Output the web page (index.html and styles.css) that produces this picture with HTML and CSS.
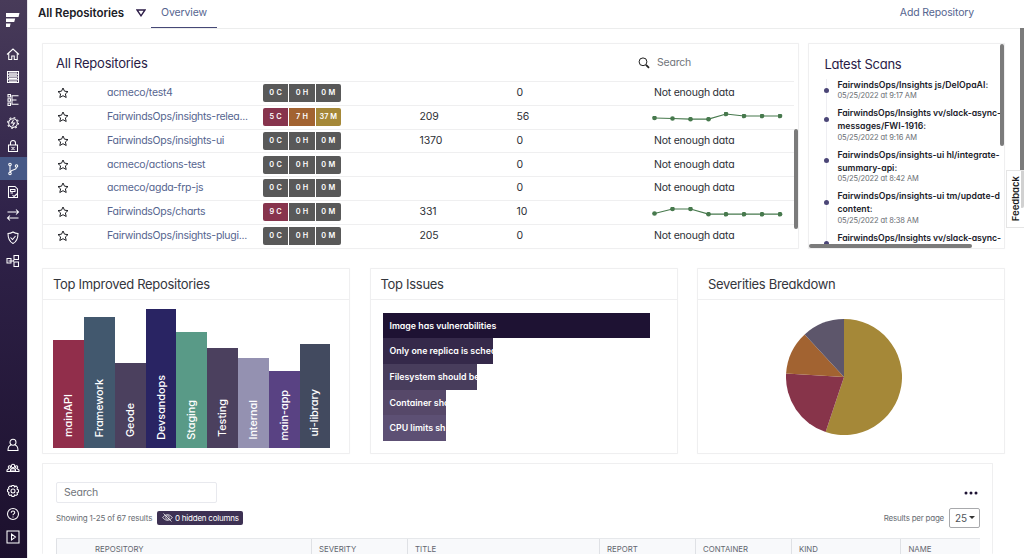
FILE: index.html
```html
<!DOCTYPE html>
<html lang="en">
<head>
<meta charset="utf-8">
<title>All Repositories</title>
<link rel="stylesheet" href="styles.css">
</head>
<body>
<svg class="defs" width="0" height="0"><defs><marker id="dot" viewBox="0 0 6 6" refX="3" refY="3" markerWidth="5" markerHeight="5" markerUnits="userSpaceOnUse"><circle cx="3" cy="3" r="2.800" fill="#47794d"/></marker></defs></svg>
<div class="app">
  <nav class="sidebar">
    <svg class="logo" viewBox="0 0 14 14"><path d="M0 0h13.500l-1 4H0zM0 5.400h9.200l-1 3.500H0zM0 10.400h4.600l-.8 3.600H0z" fill="#fff"/></svg>
    <a class="nav"><svg viewBox="0 0 24 24"><path d="M0 13 12 2l12 11M3.500 11v12h6v-7h5v7h6V11"/></svg></a>
    <a class="nav"><svg viewBox="0 0 24 24"><path d="M1 1h22v22H1zM1 6.500h22M1 12h22M1 17.500h22M4 3.800h16M4 9.300h16M4 14.800h16M4 20.300h16"/></svg></a>
    <a class="nav"><svg viewBox="0 0 24 24"><path d="M2 1h5v5H2zM2 9.500h5v5H2zM2 18h5v5H2zM9 3.500h14M9 12h10M9 20.500h14M10 3v18"/></svg></a>
    <a class="nav"><svg viewBox="0 0 24 24"><circle cx="12" cy="12" r="8.700"/><circle cx="12" cy="12" r="10.900" stroke-dasharray="3.500 5.060"/><path d="m13 6-4 6h6l-4 6"/></svg></a>
    <a class="nav"><svg viewBox="0 0 24 24"><path d="M3 10h18v13H3zM7 10V6a5 5 0 0 1 10 0v4M9 14l6 6M15 14l-6 6"/></svg></a>
    <a class="nav active"><svg viewBox="0 0 24 24"><circle cx="6" cy="3" r="2.500"/><circle cx="19" cy="6" r="2.500"/><circle cx="6" cy="21" r="2.500"/><path d="M6 6v12M19 9c0 6-10 3-12 9"/></svg></a>
    <a class="nav"><svg viewBox="0 0 24 24"><path d="M3 1h13l5 5v17H3zM7 7h9v4H7zM7 14h5M11 18l3 3 7-6"/></svg></a>
    <a class="nav"><svg viewBox="0 0 24 24"><path d="M1 6h22M18 1l5 5-5 5M23 18H1M6 13l-5 5 5 5"/></svg></a>
    <a class="nav"><svg viewBox="0 0 24 24"><path d="M12 0c3 2 6 3 10 3 0 10-2 16-10 20C4 19 2 13 2 3c4 0 7-1 10-3zM7 11l4 4 6-7"/></svg></a>
    <a class="nav"><svg viewBox="0 0 24 24"><path d="M0 7h8v9H0zM14 1h9v8h-9zM14 14h9v9h-9zM8 12h4l3-3M12 12l3 3M3 12h4"/></svg></a>
    <div class="grow"></div>
    <a class="nav"><svg viewBox="0 0 24 24"><circle cx="12" cy="6.500" r="6"/><path d="M8 12c-4 1-6 4-6 11h20c0-7-2-10-6-11"/></svg></a>
    <a class="nav"><svg viewBox="0 0 24 24"><circle cx="12" cy="8" r="3.500"/><circle cx="5" cy="10" r="2.500"/><circle cx="19" cy="10" r="2.500"/><path d="M7 19v-4q5-5 10 0v4zM7 19H0v-3l4-3M17 19h7v-3l-4-3M10 15v4M14 15v4"/></svg></a>
    <a class="nav"><svg viewBox="0 0 24 24"><circle cx="12" cy="12" r="4"/><path d="m10 1 4 0 1 3 3-2 3 3-1 3 3 2v4l-3 1 1 4-3 2-3-1-1 3h-4l-1-3-4 1-2-3 1-3-3-2v-4l3-1-1-3 3-3 3 1z"/></svg></a>
    <a class="nav"><svg viewBox="0 0 24 24"><circle cx="12" cy="12" r="11"/><path d="M8.500 9.500c0-5 7-4 7-.5 0 3-3.500 2.500-3.500 5.500M12 17v2"/></svg></a>
    <a class="nav"><svg viewBox="0 0 24 24"><path d="M0 0h24v24H0zM9 6v12l8-6z"/></svg></a>
  </nav>
  <main class="main">
    <header class="topbar">
      <strong class="page-name">All Repositories</strong>
      <svg class="caret" viewBox="0 0 10 8"><path d="M1 1h8L5 6.800z"/></svg>
      <a class="tab">Overview</a>
      <a class="add">Add Repository</a>
    </header>
    <div class="content">
      <div class="row top-row">
        <section class="card repos">
          <div class="repos-head"><h2>All Repositories</h2>
            <svg class="mag" viewBox="0 0 12 12"><circle cx="5" cy="4.800" r="3.900"/><path class="handle" d="m8 7.800 3 3"/></svg><span class="ph">Search</span></div>
          <div class="repo"><svg class="star" viewBox="0 0 12 12"><path d="m6 1 1.500 3.200 3.500.4-2.600 2.300.8 3.600L6 8.700l-3.200 1.800.8-3.600L1 4.600l3.500-.4z"/></svg><a>acmeco/test4</a><span class="sev"><b>0 C</b><b>0 H</b><b>0 M</b></span><span class="n1"></span><span class="n2">0</span><span class="trend">Not enough data</span></div>
          <div class="repo"><svg class="star" viewBox="0 0 12 12"><path d="m6 1 1.500 3.200 3.500.4-2.600 2.300.8 3.600L6 8.700l-3.200 1.800.8-3.600L1 4.600l3.500-.4z"/></svg><a>FairwindsOps/insights-relea...</a><span class="sev"><b class="crit">5 C</b><b class="high">7 H</b><b class="med">37 M</b></span><span class="n1">209</span><span class="n2">56</span><svg class="spark" viewBox="0 0 132 20"><polyline points="2.500,11 20.500,11.500 38.500,12.200 56.500,12.200 74,7 92,9 110,9 128,9"/></svg></div>
          <div class="repo"><svg class="star" viewBox="0 0 12 12"><path d="m6 1 1.500 3.200 3.500.4-2.600 2.300.8 3.600L6 8.700l-3.200 1.800.8-3.600L1 4.600l3.500-.4z"/></svg><a>FairwindsOps/insights-ui</a><span class="sev"><b>0 C</b><b>0 H</b><b>0 M</b></span><span class="n1">1370</span><span class="n2">0</span><span class="trend">Not enough data</span></div>
          <div class="repo"><svg class="star" viewBox="0 0 12 12"><path d="m6 1 1.500 3.200 3.500.4-2.600 2.300.8 3.600L6 8.700l-3.200 1.800.8-3.600L1 4.600l3.500-.4z"/></svg><a>acmeco/actions-test</a><span class="sev"><b>0 C</b><b>0 H</b><b>0 M</b></span><span class="n1"></span><span class="n2">0</span><span class="trend">Not enough data</span></div>
          <div class="repo"><svg class="star" viewBox="0 0 12 12"><path d="m6 1 1.500 3.200 3.500.4-2.600 2.300.8 3.600L6 8.700l-3.200 1.800.8-3.600L1 4.600l3.500-.4z"/></svg><a>acmeco/agda-frp-js</a><span class="sev"><b>0 C</b><b>0 H</b><b>0 M</b></span><span class="n1"></span><span class="n2">0</span><span class="trend">Not enough data</span></div>
          <div class="repo"><svg class="star" viewBox="0 0 12 12"><path d="m6 1 1.500 3.200 3.500.4-2.600 2.300.8 3.600L6 8.700l-3.200 1.800.8-3.600L1 4.600l3.500-.4z"/></svg><a>FairwindsOps/charts</a><span class="sev"><b class="crit">9 C</b><b>0 H</b><b>0 M</b></span><span class="n1">331</span><span class="n2">10</span><svg class="spark" viewBox="0 0 132 20"><polyline points="2.500,11.500 20.500,7 38.500,7 56.500,12.200 74,12.200 92,12.200 110,12.200 128,12.200"/></svg></div>
          <div class="repo"><svg class="star" viewBox="0 0 12 12"><path d="m6 1 1.500 3.200 3.500.4-2.600 2.300.8 3.600L6 8.700l-3.200 1.800.8-3.600L1 4.600l3.500-.4z"/></svg><a>FairwindsOps/insights-plugi...</a><span class="sev"><b>0 C</b><b>0 H</b><b>0 M</b></span><span class="n1">205</span><span class="n2">0</span><span class="trend">Not enough data</span></div>
          <i class="bar repo-bar"></i>
        </section>
        <section class="card scans">
          <h2>Latest Scans</h2>
          <div class="timeline">
            <div class="scan"><b>FairwindsOps/Insights js/DelOpaAI:</b><time>05/25/2022 at 9:17 AM</time></div>
            <div class="scan"><b class="tight">FairwindsOps/Insights vv/slack-async-</b><b>messages/FWI-1916:</b><time>05/25/2022 at 9:16 AM</time></div>
            <div class="scan"><b>FairwindsOps/insights-ui hl/integrate-</b><b>summary-api:</b><time>05/25/2022 at 8:42 AM</time></div>
            <div class="scan"><b>FairwindsOps/insights-ui tm/update-d</b><b>content:</b><time>05/25/2022 at 8:38 AM</time></div>
            <div class="scan"><b class="tight">FairwindsOps/Insights vv/slack-async-</b></div>
          </div>
          <i class="bar scan-v"></i><i class="bar scan-h"></i>
        </section>
      </div>
      <div class="row mid-row">
        <section class="card chart"><h3>Top Improved Repositories</h3>
          <div class="columns">
            <div style="height:108px;background:#912e4b"><span>mainAPI</span></div>
            <div style="height:131px;background:#42586e"><span>Framework</span></div>
            <div style="height:85px;background:#4b405e"><span>Geode</span></div>
            <div style="height:139px;background:#292463"><span class="low">Devsandops</span></div>
            <div style="height:116px;background:#599a87"><span class="low">Staging</span></div>
            <div style="height:100px;background:#4b405e"><span>Testing</span></div>
            <div style="height:90px;background:#9491b1"><span class="low">Internal</span></div>
            <div style="height:77px;background:#594283"><span class="low">main-app</span></div>
            <div style="height:104px;background:#424a5f"><span>ui-library</span></div>
          </div>
        </section>
        <section class="card chart"><h3>Top Issues</h3>
          <div class="issues">
            <div style="width:267px;background:#1e1233">Image has vulnerabilities</div>
            <div style="width:110px;background:#35294a">Only one replica is sched</div>
            <div style="width:94px;background:#483d5c">Filesystem should be</div>
            <div style="width:63px;background:#564869">Container sho</div>
            <div style="width:63px;background:#5d5074">CPU limits sh</div>
          </div>
        </section>
        <section class="card chart"><h3>Severities Breakdown</h3>
          <svg class="pie" viewBox="-58 -58 116 116"><path fill="#a58838" d="M0 0V-58A58 58 0 1 1-18.400 55z"/><path fill="#87344a" d="M0 0-18.400 55A58 58 0 0 1-57.900-3.500z"/><path fill="#a26331" d="M0 0-57.900-3.500A58 58 0 0 1-39.300-42.600z"/><path fill="#5d566b" d="M0 0-39.300-42.600A58 58 0 0 1 0-58z"/></svg>
        </section>
      </div>
      <section class="card results">
        <div class="input">Search</div>
        <div class="tools">
          <span class="showing">Showing 1-25 of 67 results</span>
          <span class="hidden"><svg viewBox="0 0 12 10"><path d="M.5 5Q6-1.500 11.500 5 6 11.500.500 5zM1.500.5l9 9"/><circle cx="6" cy="5" r="2"/></svg><span>0 hidden columns</span></span>
          <span class="grow"></span>
          <span class="per">Results per page</span>
          <div class="pager"><svg class="dots" viewBox="0 0 14 4"><circle cx="2" cy="2" r="1.500"/><circle cx="7" cy="2" r="1.500"/><circle cx="12" cy="2" r="1.500"/></svg><span class="select">25<i></i></span></div>
        </div>
        <div class="thead"><span>REPOSITORY</span><span>SEVERITY</span><span>TITLE</span><span>REPORT</span><span>CONTAINER</span><span>KIND</span><span>NAME</span></div>
      </section>
    </div>
  </main>
  <i class="page-bar"></i>
  <div class="feedback"><span>Feedback</span></div>
</div>
</body>
</html>
```
FILE: styles.css
```css
* { box-sizing: border-box; }
body { margin: 0; background: #fff; color: #2d2f36; font-family: Inter, "Open Sans", sans-serif; font-feature-settings: "cv11"; }
.defs { position: absolute; }
h2, h3 { margin: 0; font-weight: 400; white-space: nowrap; }
.app { position: relative; display: flex; width: 1024px; height: 559px; overflow: hidden; }
.sidebar { display: flex; flex-direction: column; width: 28px; height: 558px; flex: none; padding: 13px 0 9px; background: linear-gradient(#483b59, #30234a 38%, #1c102d); border-right: 1px solid #e9e7ec; }
.logo { width: 14px; height: 14px; margin: 0 0 15px 6px; flex: none; }
.nav { display: flex; height: 23.070px; flex: none; align-items: center; padding-left: 7px; }
.nav.active { background: #465886; }
.nav svg { width: 12px; height: 12px; fill: none; stroke: #fff; stroke-width: 2.100; overflow: visible; }
.grow { flex: 1; }
.main { flex: 1; min-width: 0; display: flex; flex-direction: column; }
.topbar { height: 29px; flex: none; display: flex; align-items: flex-start; margin-right: 4px; padding: 0 46px 0 10px; border-bottom: 1px solid #eceded; line-height: 25px; white-space: nowrap; }
.page-name { width: 98px; font-size: 11.500px; font-weight: 600; letter-spacing: -.04px; line-height: 26px; color: #202127; }
.caret { width: 10px; height: 8px; margin-top: 9px; fill: none; stroke: #2c1c47; stroke-width: 1.400; }
.tab { width: 66px; height: 28px; margin-left: 5px; text-align: center; font-size: 10.500px; color: #56658f; border-bottom: 1px solid #454876; letter-spacing: -.13px; }
.add { margin-left: auto; font-size: 10.500px; color: #56658f; letter-spacing: -.15px; }
.content { padding: 14px 0 0 14px; width: 982px; }
.row { display: flex; }
.top-row { height: 206px; gap: 9px; }
.card { position: relative; background: #fff; border: 1px solid #efeff0; box-shadow: 0 0 1px #eee; border-radius: 1px; }
.repos { width: 757.400px; }
h2 { font-size: 13px; color: #291b46; letter-spacing: -.22px; }
.repos-head { height: 37px; display: flex; align-items: center; padding-left: 13px; }
.repos-head h2 { width: 583px; }
.mag { width: 12px; height: 12px; margin-left: -1px; fill: none; stroke: #222; stroke-width: 1; }
.mag .handle { stroke-width: 1.700; }
.ph { margin-left: 7px; font-size: 10.500px; letter-spacing: -.2px; color: #71757b; }
.repo { height: 23.750px; border-top: 1px solid #efeff0; display: flex; align-items: center; padding-left: 14px; margin-right: 4px; font-size: 10.500px; line-height: 16px; white-space: nowrap; }
.star { width: 12px; height: 12px; fill: none; stroke: #202126; stroke-width: 1; flex: none; }
.repo a { width: 156px; margin-left: 38px; color: #56658f; letter-spacing: -.28px; flex: none; }
.sev { display: flex; width: 78px; gap: 1px; flex: none; border-radius: 2px; overflow: hidden; }
.sev b { flex: 1; height: 18px; background: #595959; color: #fff; font-size: 7.300px; font-weight: 600; letter-spacing: .2px; line-height: 18px; text-align: center; }
.sev .crit { background: #87344d; } .sev .high { background: #a26331; } .sev .med { background: #a58838; letter-spacing: 0; }
.n1 { width: 97px; margin-left: 78.500px; flex: none; letter-spacing: -.1px; } .n2 { width: 137.500px; flex: none; letter-spacing: -.1px; }
.trend { letter-spacing: -.22px; }
.spark { width: 132px; height: 20px; margin-left: -2px; fill: none; stroke: #47794d; stroke-width: 1.200; overflow: visible; }
.spark polyline { marker: url(#dot); }
.bar { position: absolute; background: #7b7b7b; border-radius: 2px; }
.repo-bar { right: 0; top: 85px; width: 4px; height: 100px; }
.scans { width: 197px; padding: 12px 4px 0 15px; overflow: hidden; }
.scans h2 { line-height: 16px; letter-spacing: -.25px; }
.timeline { margin: 6.500px 0 0 2px; border-left: 1px solid #eeeef2; padding-left: 10px; width: 177px; height: 168px; }
.scan { position: relative; margin-bottom: 3.400px; }
.scan::before { content: ""; position: absolute; left: -13px; top: 9.500px; width: 5px; height: 5px; border-radius: 50%; background: #4b4677; }
.scan b { display: block; font-size: 8.700px; font-weight: 600; line-height: 12.750px; white-space: nowrap; color: #20212a; letter-spacing: .03px; }
.scan .tight { letter-spacing: -.05px; }
.scan time { display: block; font-size: 7.500px; line-height: 12px; margin-top: -1px; color: #696d73; margin-bottom: 5px; letter-spacing: -.12px; }
.scan-v { right: 0; top: 0; width: 4px; height: 102px; } .scan-h { left: 0; bottom: 0; width: 163px; height: 4px; }
.mid-row { margin-top: 19px; gap: 19.500px; height: 186px; }
.chart { width: 308px; }
h3 { height: 31px; line-height: 31px; font-size: 13px; letter-spacing: -.3px; padding-left: 10px; border-bottom: 1px solid #efeff0; color: #34363c; }
.columns { display: flex; align-items: flex-end; height: 148px; margin-left: 10.300px; width: 277px; }
.columns div { flex: 1; display: flex; justify-content: center; align-items: flex-end; padding: 0 0 11px 1px; }
.columns span { writing-mode: vertical-rl; transform: rotate(180deg); color: #fff; font-size: 10.800px; font-weight: 500; line-height: 14px; white-space: nowrap; }
.columns .low { margin-bottom: -3px; }
.issues { padding: 12.500px 0 0 12.500px; }
.issues div { height: 25.700px; line-height: 25px; padding-left: 6.500px; overflow: hidden; white-space: nowrap; color: #fff; font-size: 8.800px; font-weight: 600; }
.pie { display: block; width: 116px; height: 116px; margin: 19px 0 0 88px; }
.results { width: 951px; height: 91px; margin-top: 9px; padding: 18px 12px 0 13px; border-bottom: 0; box-shadow: none; overflow: hidden; }
.input { width: 161px; height: 21px; border: 1px solid #e8e9ee; border-radius: 2px; padding-left: 7px; font-size: 10.500px; line-height: 19px; letter-spacing: -.2px; color: #71757b; }
.tools { height: 34.500px; display: flex; align-items: center; padding-bottom: 5px; color: #696d73; font-size: 8px; }
.showing { width: 101px; white-space: nowrap; letter-spacing: -.17px; }
.hidden { width: 86px; height: 14px; display: flex; align-items: center; gap: 2px; border-radius: 2px; padding-left: 5px; background: #3d3153; color: #fff; font-size: 8px; white-space: nowrap; letter-spacing: -.23px; }
.hidden svg { width: 11px; height: 9px; fill: none; stroke: #fff; stroke-width: .8; }
.per { margin-right: 5px; letter-spacing: -.23px; }
.pager { position: relative; }
.dots { position: absolute; right: 2px; top: -17px; width: 14px; height: 4px; fill: #1d1233; }
.select { display: flex; align-items: center; width: 31px; height: 20px; border: 1px solid #a8a9ac; border-radius: 2px; padding-left: 5px; font-size: 10px; letter-spacing: -.2px; color: #50555b; }
.select i { margin-left: 2px; border: 3px solid transparent; border-top: 3px solid #333; border-bottom: 0; }
.thead { display: grid; grid-template-columns: 254.500px 96px 192px 96px 96px 109.500px 1fr; height: 24px; border-top: 1px solid #e6e8eb; background: #f8f9fb; font-size: 7.800px; line-height: 21px; color: #62666f; width: 924px; }
.thead span { border-left: 1px solid #dfe1e5; padding-left: 7.500px; white-space: nowrap; }
.thead span:first-child { padding-left: 38px; }
.page-bar { position: absolute; right: 0; top: 28px; width: 4px; height: 180px; background: #7b7b7b; border-radius: 0 0 2px 2px; }
.feedback { position: absolute; right: 0; top: 170px; width: 18px; height: 58px; border: 1px solid #e5e5e5; border-right: 0; display: flex; align-items: center; justify-content: center; background: linear-gradient(90deg, #fff 14px, rgba(255,255,255,.65) 14px); }
.feedback span { writing-mode: vertical-rl; transform: rotate(180deg); font-size: 9.500px; line-height: 12px; font-weight: 600; color: #1c1c22; }
```
